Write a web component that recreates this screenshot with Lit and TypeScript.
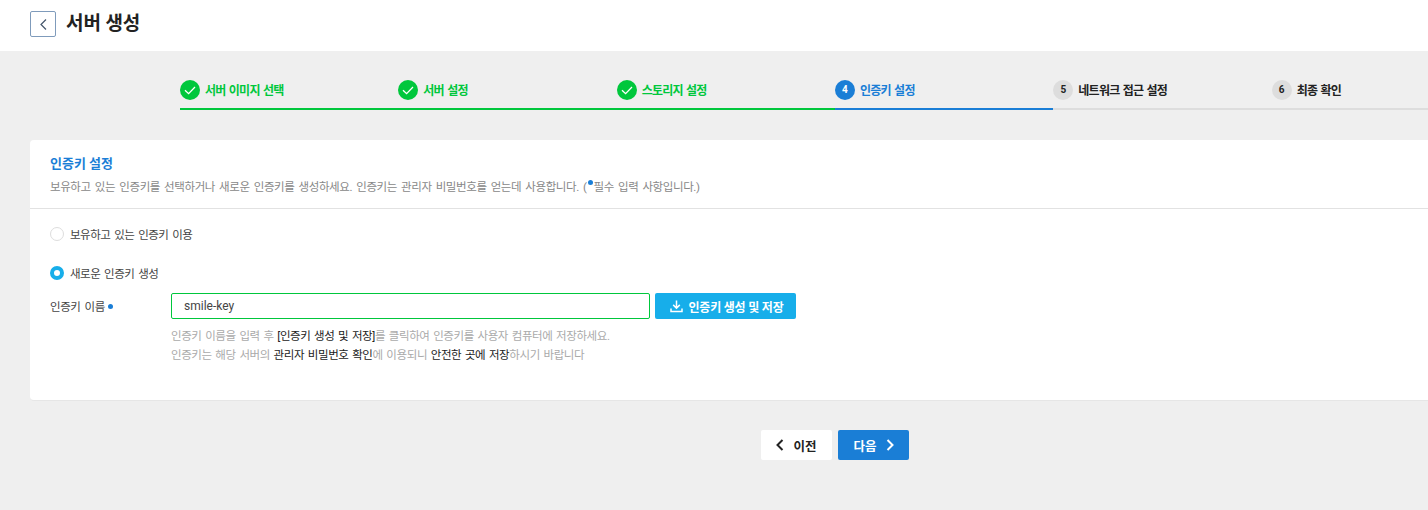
import { LitElement, html, css, svg } from 'lit';
import { customElement } from 'lit/decorators.js';

type Step = { no: number; label: string; state: 'done' | 'active' | 'todo' };

const STEPS: Step[] = [
  { no: 1, label: '서버 이미지 선택', state: 'done' },
  { no: 2, label: '서버 설정', state: 'done' },
  { no: 3, label: '스토리지 설정', state: 'done' },
  { no: 4, label: '인증키 설정', state: 'active' },
  { no: 5, label: '네트워크 접근 설정', state: 'todo' },
  { no: 6, label: '최종 확인', state: 'todo' },
];

const chevron = (d: string) => svg`<path d=${d} fill="none" stroke="currentColor" stroke-width="2"/>`;

@customElement('app-root')
export class AppRoot extends LitElement {
  static styles = css`
    :host {
      display: block;
      width: 100%;
      height: 510px;
      overflow: hidden;
      background: #efefef;
      font-family: Roboto, 'Noto Sans CJK KR', sans-serif;
      font-size: 12px;
      color: #222;
    }
    .page {
      width: 1670px;
    }
    .header {
      height: 51px;
      background: #fff;
      padding: 11px 30px 0;
      box-sizing: border-box;
      display: flex;
      align-items: flex-start;
      gap: 10px;
    }
    .back {
      width: 26px;
      height: 26px;
      box-sizing: border-box;
      border: 1px solid #7f9bbb;
      border-radius: 2px;
      background: #fff;
      color: #44566b;
      padding: 0;
      display: flex;
      align-items: center;
      justify-content: center;
    }
    h1 {
      margin: 0;
      padding-top: 1px;
      font-size: 19px;
      line-height: 24px;
      font-weight: 700;
      letter-spacing: -0.1px;
      color: #222;
    }
    .steps {
      display: grid;
      grid-template-columns: repeat(6, 218.33px);
      margin: 29px 0 30px 180px;
    }
    .step {
      height: 28px;
      border-bottom: 2px solid #ddd;
      display: flex;
      align-items: flex-start;
      gap: 5px;
      font-size: 12px;
      line-height: 20px;
      font-weight: 700;
      letter-spacing: -0.75px;
      word-spacing: 1px;
    }
    .step .name {
      padding-top: 1px;
    }
    .step.done {
      color: #00c73c;
      border-color: #00c73c;
    }
    .step.active {
      color: #1a7ed6;
      border-color: #1a7ed6;
    }
    .dot {
      width: 20px;
      height: 20px;
      border-radius: 50%;
      flex: none;
      display: flex;
      align-items: center;
      justify-content: center;
      background: #ddd;
      color: #222;
      font-size: 10px;
      letter-spacing: 0;
    }
    .step.done .dot {
      background: #00c73c;
      color: #fff;
    }
    .step.active .dot {
      background: #1a7ed6;
      color: #fff;
    }
    .card {
      margin-left: 30px;
      background: #fff;
      border-radius: 4px;
      border-bottom: 1px solid #e6e6e6;
      height: 261px;
      box-sizing: border-box;
    }
    .card-head {
      height: 69px;
      box-sizing: border-box;
      padding: 14px 20px 0;
      border-bottom: 1px solid #e2e2e2;
    }
    h2 {
      margin: 0 0 4px;
      font-size: 13px;
      line-height: 20px;
      font-weight: 700;
      color: #1a7ed6;
    }
    .desc {
      font-size: 11.5px;
      line-height: 18px;
      letter-spacing: -0.4px;
      word-spacing: 1.65px;
      color: #888;
    }
    .req {
      display: inline-block;
      width: 5px;
      height: 5px;
      border-radius: 50%;
      background: #1a7ed6;
      vertical-align: 6px;
      margin: 0 1px;
    }
    .radio {
      display: flex;
      align-items: flex-start;
      gap: 6px;
      margin-left: 20px;
      height: 14px;
      font-size: 11.5px;
      line-height: 16px;
      letter-spacing: -0.5px;
      word-spacing: 1.5px;
      color: #444;
    }
    .radio i {
      width: 14px;
      height: 14px;
      box-sizing: border-box;
      border-radius: 50%;
      border: 1px solid #ddd;
      background: #fff;
    }
    .radio.on i {
      border: 4px solid #17aeea;
    }
    .radio.first {
      margin-top: 18px;
    }
    .radio.second {
      margin-top: 25px;
    }
    .field {
      display: flex;
      margin: 13px 0 0 20px;
    }
    .field label {
      width: 121px;
      height: 26px;
      font-size: 11.5px;
      line-height: 28px;
      letter-spacing: -0.4px;
      word-spacing: 1.5px;
      color: #444;
    }
    .field label .req {
      vertical-align: 2px;
      margin-left: 3px;
    }
    .input {
      width: 479px;
      height: 26px;
      box-sizing: border-box;
      border: 1px solid #00c73c;
      border-radius: 2px;
      padding-left: 12px;
      line-height: 24px;
      font-size: 12px;
      color: #444;
    }
    .save {
      margin-left: 5px;
      width: 141px;
      height: 26px;
      border: 0;
      border-radius: 2px;
      background: #17aeea;
      color: #fff;
      font: inherit;
      font-weight: 700;
      letter-spacing: -0.2px;
      display: flex;
      align-items: center;
      justify-content: center;
      gap: 5px;
      padding: 0 0 0 3px;
    }
    .help {
      margin: 8px 0 0 141px;
      font-size: 11.5px;
      line-height: 18.5px;
      letter-spacing: -0.4px;
      word-spacing: 1.2px;
      color: #aaa;
    }
    .help b {
      font-weight: 400;
      color: #222;
    }
    .actions {
      display: flex;
      justify-content: center;
      gap: 6px;
      margin-top: 29px;
    }
    .actions button {
      width: 71px;
      height: 30px;
      border: 0;
      border-radius: 2px;
      font: inherit;
      font-size: 12.5px;
      font-weight: 700;
      display: flex;
      align-items: center;
      justify-content: center;
      gap: 9px;
      padding: 0;
    }
    .prev {
      background: #fff;
      color: #222;
    }
    .next {
      background: #1a7ed6;
      color: #fff;
    }
  `;

  renderStep(s: Step) {
    return html`<div class="step ${s.state}">
      <span class="dot">
        ${s.state === 'done'
          ? html`<svg width="20" height="20" viewBox="0 0 20 20"><path d="M5 10.2l3.6 3.4L15 7" fill="none" stroke="currentColor" stroke-width="1.3"/></svg>`
          : s.no}
      </span>
      <span class="name">${s.label}</span>
    </div>`;
  }

  render() {
    return html`<div class="page">
      <div class="header">
        <button class="back" aria-label="뒤로">
          <svg width="9" height="13" viewBox="0 0 9 13">
            <path d="M7 1.5L2 6.5l5 5" fill="none" stroke="currentColor" stroke-width="1.2"/>
          </svg>
        </button>
        <h1>서버 생성</h1>
      </div>

      <div class="steps">${STEPS.map((s) => this.renderStep(s))}</div>

      <section class="card">
        <div class="card-head">
          <h2>인증키 설정</h2>
          <div class="desc">
            보유하고 있는 인증키를 선택하거나 새로운 인증키를 생성하세요. 인증키는 관리자 비밀번호를 얻는데 사용합니다. (<span class="req"></span>필수 입력 사항입니다.)
          </div>
        </div>
        <div class="radio first"><i></i><span>보유하고 있는 인증키 이용</span></div>
        <div class="radio on second"><i></i><span>새로운 인증키 생성</span></div>
        <div class="field">
          <label>인증키 이름<span class="req"></span></label>
          <div class="input">smile-key</div>
          <button class="save">
            <svg width="13" height="14" viewBox="0 0 13 14">
              <path d="M6.5 1.5v7.5M3.2 5.9l3.3 3.3 3.3-3.3M1 9.5v3h11v-3" fill="none" stroke="currentColor" stroke-width="1.5"/>
            </svg>
            인증키 생성 및 저장
          </button>
        </div>
        <div class="help">
          인증키 이름을 입력 후 <b>[인증키 생성 및 저장]</b>를 클릭하여 인증키를 사용자 컴퓨터에 저장하세요.<br />
          인증키는 해당 서버의 <b>관리자 비밀번호 확인</b>에 이용되니 <b>안전한 곳에 저장</b>하시기 바랍니다
        </div>
      </section>

      <div class="actions">
        <button class="prev">
          <svg width="8" height="12" viewBox="0 0 8 12">${chevron('M6.5 1L1.5 6l5 5')}</svg>
          이전
        </button>
        <button class="next">
          다음
          <svg width="8" height="12" viewBox="0 0 8 12">${chevron('M1.5 1l5 5-5 5')}</svg>
        </button>
      </div>
    </div>`;
  }
}
